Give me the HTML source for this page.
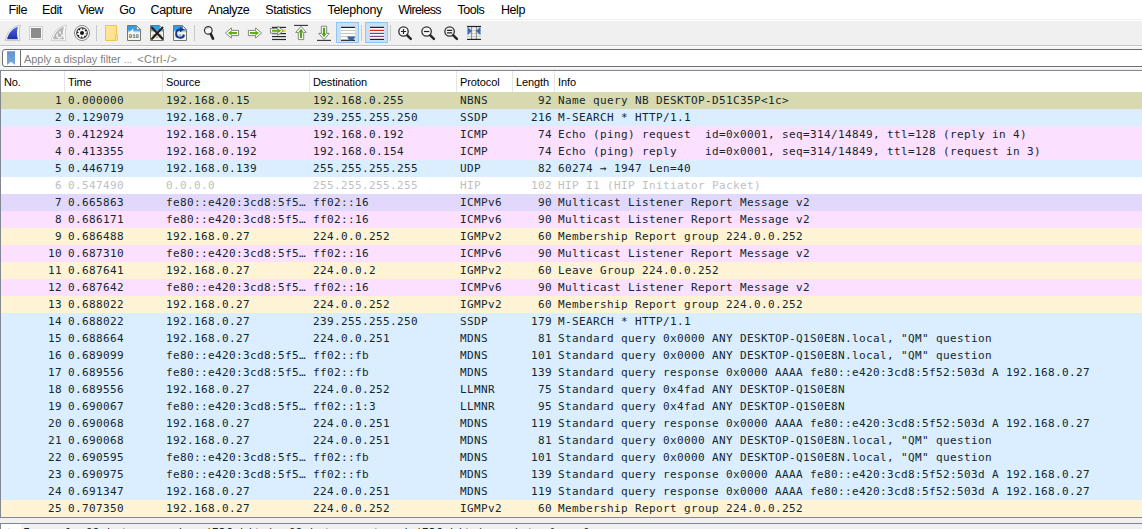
<!DOCTYPE html>
<html><head><meta charset="utf-8"><title>Wireshark</title>
<style>
html,body{margin:0;padding:0}
body{width:1142px;height:529px;overflow:hidden;background:#f0f0f0;position:relative;font-family:"Liberation Sans",sans-serif;font-size:12px;color:#000}
#menubar{position:absolute;left:0;top:0;width:1142px;height:19px;background:#fff}
#menubar span{position:absolute;top:3px;font-size:12.5px;line-height:15px;letter-spacing:-0.45px;white-space:nowrap}
#toolbar{position:absolute;left:0;top:19px;width:1142px;height:26px;background:#f0f0f0;border-top:1px solid #f0f0f0;box-sizing:border-box}
#tbw{position:absolute;left:0;top:20px;width:1142px;height:1px;background:#fff}
#tbline{position:absolute;left:0;top:45px;width:1142px;height:1px;background:#c3c3c3}
#tbline2{position:absolute;left:0;top:46px;width:1142px;height:3px;background:#f4f4f4;border-top:1px solid #fdfdfd;box-sizing:border-box}
#fl2{position:absolute;left:0;top:67px;width:1142px;height:1px;background:#fbfbfb}
#filter{position:absolute;left:2px;top:49px;width:1160px;height:18px;box-sizing:border-box;border:1px solid #6e6e6e;border-radius:3px;background:#fff}
#filter .bm{position:absolute;left:0;top:0;width:17px;height:16px;border-right:1px solid #6e6e6e}
#filter .ph{position:absolute;left:21px;top:2px;font-size:11px;line-height:15px;color:#7f7f7f;white-space:nowrap;letter-spacing:-0.05px}
#list{position:absolute;left:0;top:70px;width:1160px;height:448px;box-sizing:border-box;border:1px solid #828790;background:#fff}
#hdr{position:absolute;left:1px;top:71px;width:1141px;height:21px;background:#fff}
#hdr span{position:absolute;top:4px;font-size:11px;line-height:15px;white-space:nowrap;letter-spacing:-0.1px}
#hdr i{position:absolute;top:0;width:1px;height:21px;background:#e5e5e5}
.r{position:absolute;left:1px;width:1141px;height:17px;font-family:"DejaVu Sans Mono","Liberation Mono",monospace;font-size:11px;letter-spacing:0.378px;line-height:17px;white-space:pre;color:#12272e}
.c{position:absolute;top:0px}
.no{right:1080px;text-align:right}
.tm{left:67px}.src{left:165px}.dst{left:312px}.pr{left:459px}
.len{right:590px;text-align:right}
.inf{left:557px}
.ar{line-height:0}
.sel{background:#d9d9b1}
.udp{background:#daeeff}
.icmp{background:#fce0ff}
.hov{background:#e2d8fb}
.igmp{background:#fff3d6}
.hip{background:#fff;color:#c0c0c0}
#gap{position:absolute;left:0;top:518px;width:1142px;height:5px;background:#f0f0f0}
#detail{position:absolute;left:0;top:523px;width:1160px;height:40px;box-sizing:border-box;border:1px solid #828790;background:#fff}
#detail .row{position:absolute;left:20px;top:0;width:1140px;height:20px;padding:0 0 0 2px;background:#f0f0f0;font-family:"DejaVu Sans Mono","Liberation Mono",monospace;font-size:11px;letter-spacing:0.378px;line-height:17px;white-space:pre;color:#12272e}
#detail .ex{position:absolute;left:7px;top:-1px;font-size:11px;line-height:17px;color:#555}
</style></head><body>
<div id="menubar">
<span style="left:8.6px">File</span><span style="left:42px">Edit</span><span style="left:78px">View</span><span style="left:119.3px">Go</span><span style="left:150.6px">Capture</span><span style="left:208px">Analyze</span><span style="left:265.3px">Statistics</span><span style="left:327.4px;letter-spacing:-0.25px">Telephony</span><span style="left:398.2px;letter-spacing:-0.65px">Wireless</span><span style="left:457.4px">Tools</span><span style="left:501px">Help</span>
</div>
<div id="toolbar"></div><div id="tbw"></div>
<div id="tbline"></div><div id="tbline2"></div><div id="fl2"></div>
<svg id="icons" width="500" height="26" viewBox="0 20 500 26" style="position:absolute;left:0;top:20px">
<defs>
<linearGradient id="gfin" x1="0" y1="0" x2="0" y2="1"><stop offset="0" stop-color="#4a68de"/><stop offset="1" stop-color="#1f31ad"/></linearGradient>
<linearGradient id="gfold" x1="0" y1="0" x2="1" y2="1"><stop offset="0" stop-color="#ffe79a"/><stop offset="1" stop-color="#ffdf85"/></linearGradient>
<linearGradient id="gsky" x1="0" y1="0" x2="0" y2="1"><stop offset="0" stop-color="#2a9fec"/><stop offset="0.6" stop-color="#2f9fe8"/><stop offset="1" stop-color="#d8ecf8"/></linearGradient>
<g id="file">
<path d="M0.5,0.5 H9.5 L13.5,4.5 V15.5 H0.5 Z" fill="#f6f6e4" stroke="#777770" stroke-width="1"/>
<path d="M1,1 H9.3 L13,4.7 V7.4 H1 Z" fill="url(#gsky)"/>
<path d="M9.5,0.8 V4.5 H13.2 Z" fill="#fdfdf5" stroke="#6e6e6e" stroke-width="0.6"/>
</g>
<g id="lens">
<circle cx="0" cy="0" r="4.7" fill="#f6f6f6" stroke="#2e2e2e" stroke-width="1.3"/>
<path d="M3.7,3.9 L7.3,7.3" stroke="#262626" stroke-width="2.5" stroke-linecap="round"/>
</g>
</defs>
<!-- start capture fin -->
<path d="M5.2,40.6 C6.5,33 12,26 20.4,25.2 C19,30 19,36 20,40.6 Z" fill="#f9f9f9" stroke="#b9b9b9" stroke-width="0.8"/>
<path d="M7,39.2 C8.3,33.5 12.5,28.3 18,26.8 C16.6,31 16.6,35.5 18,39.2 Z" fill="url(#gfin)"/>
<!-- stop -->
<rect x="29.5" y="26.5" width="13" height="13" fill="#fafafa" stroke="#d2d2d2" stroke-width="1"/>
<rect x="31" y="28" width="10" height="10" fill="#8b8b8b"/>
<!-- restart fin -->
<path d="M51.2,40.6 C52.5,33 58,26 66.4,25.2 C65,30 65,36 66,40.6 Z" fill="#f9f9f9" stroke="#c8c8c8" stroke-width="0.8"/>
<path d="M53,39.2 C54.3,33.5 58.5,28.3 64,26.8 C62.6,31 62.6,35.5 64,39.2 Z" fill="#b5b5b5"/>
<path d="M61.9,34.2 A2.6,2.6 0 1 1 57.6,33.6" fill="none" stroke="#f4f4f4" stroke-width="1.4"/><path d="M57.9,31.6 H60.9 V34.6 Z" fill="#f4f4f4"/>
<!-- options gear -->
<circle cx="82" cy="33" r="7.5" fill="#fdfdfd" stroke="#6c6c6c" stroke-width="0.8"/>
<circle cx="82" cy="33" r="5.8" fill="#252525"/>
<circle cx="82" cy="33" r="3.9" fill="none" stroke="#fafafa" stroke-width="1.8" stroke-dasharray="1.85 1.213" transform="rotate(12 82 33)"/>
<circle cx="82" cy="33" r="3.5" fill="#fafafa"/>
<circle cx="82" cy="33" r="2" fill="#141414"/>
<!-- separators -->
<g stroke="#c9c9c9" stroke-width="1"><path d="M96.5,25 V41"/><path d="M194.5,25 V41"/><path d="M361.5,25 V41"/><path d="M390.5,25 V41"/></g>
<!-- folder -->
<path d="M105.5,25.5 H116.5 V34.5 H117.4 V40.5 H105.5 Z" fill="url(#gfold)" stroke="#eec548" stroke-width="1"/>
<path d="M115.5,40.5 V35.2 Q115.5,34.5 116.2,34.5 H116.8 Q117.4,34.5 117.4,35.2 V40.5" fill="#ffe9a6" stroke="#eec548" stroke-width="1"/>
<!-- file 010 -->
<use href="#file" x="127" y="25"/>
<path d="M129.6,32.6 C131,31.4 132,29.8 133.2,28 C133,30 133.2,31.6 134,32.6 Z" fill="#fff"/>
<text x="133.9" y="38.4" font-family="Liberation Mono, monospace" font-size="5.6" font-weight="bold" fill="#666" text-anchor="middle" letter-spacing="0">010</text>
<!-- close file -->
<use href="#file" x="150" y="25"/>
<text x="156.9" y="38.4" font-family="Liberation Mono, monospace" font-size="5.6" font-weight="bold" fill="#999" text-anchor="middle" letter-spacing="-0.2">010</text>
<path d="M152,27.6 L162.4,38.8 M162.4,27.6 L152,38.8" stroke="#1e1e1e" stroke-width="2.1" stroke-linecap="round"/>
<!-- reload -->
<use href="#file" x="173" y="25"/>
<text x="179.9" y="38.4" font-family="Liberation Mono, monospace" font-size="5.6" font-weight="bold" fill="#999" text-anchor="middle" letter-spacing="-0.2">010</text>
<path d="M184.1,34.9 A4.1,4.1 0 1 1 180.4,29.5" fill="none" stroke="#163a8c" stroke-width="1.9"/>
<path d="M180,26.8 L184.3,29.6 L180,32.2 Z" fill="#163a8c"/>
<!-- find -->
<circle cx="208.3" cy="30.4" r="3.8" fill="#f8f8f8" stroke="#2e2e2e" stroke-width="1.2"/>
<path d="M206,29.2 A2.6,2.6 0 0 1 208.8,27.9" fill="none" stroke="#999" stroke-width="0.7"/>
<path d="M210.8,34 L213,38.6" stroke="#222" stroke-width="2.6" stroke-linecap="round"/>
<!-- back -->
<path d="M225.4,33 L231.4,27.9 V30.4 H238.6 V35.6 H231.4 V38.1 Z" fill="#fff" stroke="#858585" stroke-width="1" stroke-linejoin="round"/>
<path d="M227.8,33 L231.6,30.4 V32 H237 V34 H231.6 V35.6 Z" fill="#5cb00f"/>
<!-- forward -->
<path d="M261.6,33 L255.6,27.9 V30.4 H248.4 V35.6 H255.6 V38.1 Z" fill="#fff" stroke="#858585" stroke-width="1" stroke-linejoin="round"/>
<path d="M259.2,33 L255.4,30.4 V32 H250 V34 H255.4 V35.6 Z" fill="#5cb00f"/>
<!-- goto -->
<g stroke="#232b2e" stroke-width="1.2"><path d="M272,27.4 H286"/><path d="M272,30.6 H286"/><path d="M272,33.6 H286"/><path d="M272,36.6 H286"/><path d="M272,39.5 H286"/></g>
<rect x="282" y="29.3" width="4" height="2.6" fill="#f7e03c"/>
<path d="M283.4,30.8 L277.6,26.2 V28.4 H270.4 V33.2 H277.6 V35.4 Z" fill="#fff" stroke="#858585" stroke-width="1" stroke-linejoin="round"/>
<path d="M281.2,30.8 L277.4,28.2 V29.8 H272 V31.8 H277.4 V33.4 Z" fill="#5cb00f"/>
<!-- first -->
<path d="M294,25.4 H308" stroke="#333" stroke-width="1.1"/>
<path d="M301,26.3 L306.3,32.4 H303.7 V39.6 H298.3 V32.4 H295.7 Z" fill="#fff" stroke="#858585" stroke-width="1" stroke-linejoin="round"/>
<path d="M301,28.6 L303.7,32.4 H302.1 V38 H299.9 V32.4 H298.3 Z" fill="#4fa80c"/>
<!-- last -->
<path d="M317,40.4 H331" stroke="#333" stroke-width="1.1"/>
<path d="M324,39.5 L329.3,33.4 H326.7 V26.2 H321.3 V33.4 H318.7 Z" fill="#fff" stroke="#858585" stroke-width="1" stroke-linejoin="round"/>
<path d="M324,37.2 L326.7,33.4 H325.1 V27.8 H322.9 V33.4 H321.3 Z" fill="#4fa80c"/>
<!-- autoscroll -->
<rect x="336.5" y="22.5" width="22" height="20" fill="#c9dff3" stroke="#92c5f2" stroke-width="1"/>
<rect x="341" y="27" width="14" height="13.5" fill="#fbfbf8"/>
<g stroke="#c9c9bf" stroke-width="1"><path d="M341,30.5 H355"/><path d="M341,33.5 H355"/><path d="M341,36.5 H355"/></g>
<path d="M341,27.4 H355" stroke="#222" stroke-width="1.2"/>
<path d="M341,40.3 H355" stroke="#222" stroke-width="1.2"/>
<path d="M347.2,36.6 H355.2 C354.6,39 353,40.6 351.2,40.6 C349.4,40.6 347.8,39 347.2,36.6 Z" fill="#3565a6"/>
<!-- colorize -->
<rect x="365.5" y="22.5" width="22" height="20" fill="#c9dff3" stroke="#92c5f2" stroke-width="1"/>
<rect x="370" y="27" width="14" height="13" fill="#fdfdfd"/>
<g stroke-width="1.2"><path d="M370,27.4 H384" stroke="#222"/><path d="M370,30.4 H384" stroke="#e42222"/><path d="M370,33.4 H384" stroke="#3558a5"/><path d="M370,36.4 H384" stroke="#774a85"/><path d="M370,39.4 H384" stroke="#222"/></g>
<!-- zoom in/out/100 -->
<use href="#lens" x="403.5" y="31.5"/>
<path d="M400.9,31.5 H406.1 M403.5,28.9 V34.1" stroke="#222" stroke-width="1.2"/>
<use href="#lens" x="426.6" y="31.5"/>
<path d="M424,31.5 H429.2" stroke="#222" stroke-width="1.2"/>
<use href="#lens" x="449.6" y="31.5"/>
<path d="M447,30.4 H452.2 M447,32.8 H452.2" stroke="#222" stroke-width="1.2"/>
<!-- resize columns -->
<g stroke="#cfcfc6" stroke-width="1"><path d="M467,30.5 H481"/><path d="M467,33.5 H481"/><path d="M467,36.5 H481"/></g>
<g stroke="#8b8b86" stroke-width="1"><path d="M471.6,26.5 V39.5"/><path d="M476.4,26.5 V39.5"/></g>
<path d="M467,26.5 H481" stroke="#222" stroke-width="1.2"/>
<path d="M467,39.4 H481" stroke="#222" stroke-width="1.2"/>
<path d="M467.8,27.4 L471.8,31 L467.8,34.6 Z" fill="#3a6bb4" stroke="#3a6bb4" stroke-width="0.6" stroke-linejoin="round"/>
<path d="M480.2,27.4 L476.2,31 L480.2,34.6 Z" fill="#3a6bb4" stroke="#3a6bb4" stroke-width="0.6" stroke-linejoin="round"/>
</svg>

<div id="filter"><div class="bm"><svg width="17" height="16" viewBox="0 0 17 16" style="position:absolute;left:0;top:0"><defs><linearGradient id="gbm" x1="0" y1="0" x2="0" y2="1"><stop offset="0" stop-color="#5f93d2"/><stop offset="1" stop-color="#7ba9dc"/></linearGradient></defs><path d="M4,1.3 H12 V15 L8,11.8 L4,15 Z" fill="url(#gbm)"/></svg></div><div class="ph">Apply a display filter <span style="font-size:8.5px;line-height:0">…</span> <span style="letter-spacing:0.42px;margin-left:2px">&lt;Ctrl-/&gt;</span></div></div>
<div id="list"></div>
<div id="hdr">
<span style="left:3px">No.</span><span style="left:67px">Time</span><span style="left:165px">Source</span><span style="left:312px">Destination</span><span style="left:459px">Protocol</span><span style="left:515px">Length</span><span style="left:557px">Info</span>
<i style="left:63px"></i><i style="left:161px"></i><i style="left:308px"></i><i style="left:455px"></i><i style="left:511px"></i><i style="left:553px"></i>
</div>
<div class="r sel" style="top:92px"><span class="c no">1</span><span class="c tm">0.000000</span><span class="c src">192.168.0.15</span><span class="c dst">192.168.0.255</span><span class="c pr">NBNS</span><span class="c len">92</span><span class="c inf">Name query NB DESKTOP-D51C35P&lt;1c&gt;</span></div>
<div class="r udp" style="top:109px"><span class="c no">2</span><span class="c tm">0.129079</span><span class="c src">192.168.0.7</span><span class="c dst">239.255.255.250</span><span class="c pr">SSDP</span><span class="c len">216</span><span class="c inf">M-SEARCH * HTTP/1.1</span></div>
<div class="r icmp" style="top:126px"><span class="c no">3</span><span class="c tm">0.412924</span><span class="c src">192.168.0.154</span><span class="c dst">192.168.0.192</span><span class="c pr">ICMP</span><span class="c len">74</span><span class="c inf">Echo (ping) request  id=0x0001, seq=314/14849, ttl=128 (reply in 4)</span></div>
<div class="r icmp" style="top:143px"><span class="c no">4</span><span class="c tm">0.413355</span><span class="c src">192.168.0.192</span><span class="c dst">192.168.0.154</span><span class="c pr">ICMP</span><span class="c len">74</span><span class="c inf">Echo (ping) reply    id=0x0001, seq=314/14849, ttl=128 (request in 3)</span></div>
<div class="r udp" style="top:160px"><span class="c no">5</span><span class="c tm">0.446719</span><span class="c src">192.168.0.139</span><span class="c dst">255.255.255.255</span><span class="c pr">UDP</span><span class="c len">82</span><span class="c inf">60274 <span class="ar">→</span> 1947 Len=40</span></div>
<div class="r hip" style="top:177px"><span class="c no">6</span><span class="c tm">0.547490</span><span class="c src">0.0.0.0</span><span class="c dst">255.255.255.255</span><span class="c pr">HIP</span><span class="c len">102</span><span class="c inf">HIP I1 (HIP Initiator Packet)</span></div>
<div class="r hov" style="top:194px"><span class="c no">7</span><span class="c tm">0.665863</span><span class="c src">fe80::e420:3cd8:5f5…</span><span class="c dst">ff02::16</span><span class="c pr">ICMPv6</span><span class="c len">90</span><span class="c inf">Multicast Listener Report Message v2</span></div>
<div class="r icmp" style="top:211px"><span class="c no">8</span><span class="c tm">0.686171</span><span class="c src">fe80::e420:3cd8:5f5…</span><span class="c dst">ff02::16</span><span class="c pr">ICMPv6</span><span class="c len">90</span><span class="c inf">Multicast Listener Report Message v2</span></div>
<div class="r igmp" style="top:228px"><span class="c no">9</span><span class="c tm">0.686488</span><span class="c src">192.168.0.27</span><span class="c dst">224.0.0.252</span><span class="c pr">IGMPv2</span><span class="c len">60</span><span class="c inf">Membership Report group 224.0.0.252</span></div>
<div class="r icmp" style="top:245px"><span class="c no">10</span><span class="c tm">0.687310</span><span class="c src">fe80::e420:3cd8:5f5…</span><span class="c dst">ff02::16</span><span class="c pr">ICMPv6</span><span class="c len">90</span><span class="c inf">Multicast Listener Report Message v2</span></div>
<div class="r igmp" style="top:262px"><span class="c no">11</span><span class="c tm">0.687641</span><span class="c src">192.168.0.27</span><span class="c dst">224.0.0.2</span><span class="c pr">IGMPv2</span><span class="c len">60</span><span class="c inf">Leave Group 224.0.0.252</span></div>
<div class="r icmp" style="top:279px"><span class="c no">12</span><span class="c tm">0.687642</span><span class="c src">fe80::e420:3cd8:5f5…</span><span class="c dst">ff02::16</span><span class="c pr">ICMPv6</span><span class="c len">90</span><span class="c inf">Multicast Listener Report Message v2</span></div>
<div class="r igmp" style="top:296px"><span class="c no">13</span><span class="c tm">0.688022</span><span class="c src">192.168.0.27</span><span class="c dst">224.0.0.252</span><span class="c pr">IGMPv2</span><span class="c len">60</span><span class="c inf">Membership Report group 224.0.0.252</span></div>
<div class="r udp" style="top:313px"><span class="c no">14</span><span class="c tm">0.688022</span><span class="c src">192.168.0.27</span><span class="c dst">239.255.255.250</span><span class="c pr">SSDP</span><span class="c len">179</span><span class="c inf">M-SEARCH * HTTP/1.1</span></div>
<div class="r udp" style="top:330px"><span class="c no">15</span><span class="c tm">0.688664</span><span class="c src">192.168.0.27</span><span class="c dst">224.0.0.251</span><span class="c pr">MDNS</span><span class="c len">81</span><span class="c inf">Standard query 0x0000 ANY DESKTOP-Q1S0E8N.local, "QM" question</span></div>
<div class="r udp" style="top:347px"><span class="c no">16</span><span class="c tm">0.689099</span><span class="c src">fe80::e420:3cd8:5f5…</span><span class="c dst">ff02::fb</span><span class="c pr">MDNS</span><span class="c len">101</span><span class="c inf">Standard query 0x0000 ANY DESKTOP-Q1S0E8N.local, "QM" question</span></div>
<div class="r udp" style="top:364px"><span class="c no">17</span><span class="c tm">0.689556</span><span class="c src">fe80::e420:3cd8:5f5…</span><span class="c dst">ff02::fb</span><span class="c pr">MDNS</span><span class="c len">139</span><span class="c inf">Standard query response 0x0000 AAAA fe80::e420:3cd8:5f52:503d A 192.168.0.27</span></div>
<div class="r udp" style="top:381px"><span class="c no">18</span><span class="c tm">0.689556</span><span class="c src">192.168.0.27</span><span class="c dst">224.0.0.252</span><span class="c pr">LLMNR</span><span class="c len">75</span><span class="c inf">Standard query 0x4fad ANY DESKTOP-Q1S0E8N</span></div>
<div class="r udp" style="top:398px"><span class="c no">19</span><span class="c tm">0.690067</span><span class="c src">fe80::e420:3cd8:5f5…</span><span class="c dst">ff02::1:3</span><span class="c pr">LLMNR</span><span class="c len">95</span><span class="c inf">Standard query 0x4fad ANY DESKTOP-Q1S0E8N</span></div>
<div class="r udp" style="top:415px"><span class="c no">20</span><span class="c tm">0.690068</span><span class="c src">192.168.0.27</span><span class="c dst">224.0.0.251</span><span class="c pr">MDNS</span><span class="c len">119</span><span class="c inf">Standard query response 0x0000 AAAA fe80::e420:3cd8:5f52:503d A 192.168.0.27</span></div>
<div class="r udp" style="top:432px"><span class="c no">21</span><span class="c tm">0.690068</span><span class="c src">192.168.0.27</span><span class="c dst">224.0.0.251</span><span class="c pr">MDNS</span><span class="c len">81</span><span class="c inf">Standard query 0x0000 ANY DESKTOP-Q1S0E8N.local, "QM" question</span></div>
<div class="r udp" style="top:449px"><span class="c no">22</span><span class="c tm">0.690595</span><span class="c src">fe80::e420:3cd8:5f5…</span><span class="c dst">ff02::fb</span><span class="c pr">MDNS</span><span class="c len">101</span><span class="c inf">Standard query 0x0000 ANY DESKTOP-Q1S0E8N.local, "QM" question</span></div>
<div class="r udp" style="top:466px"><span class="c no">23</span><span class="c tm">0.690975</span><span class="c src">fe80::e420:3cd8:5f5…</span><span class="c dst">ff02::fb</span><span class="c pr">MDNS</span><span class="c len">139</span><span class="c inf">Standard query response 0x0000 AAAA fe80::e420:3cd8:5f52:503d A 192.168.0.27</span></div>
<div class="r udp" style="top:483px"><span class="c no">24</span><span class="c tm">0.691347</span><span class="c src">192.168.0.27</span><span class="c dst">224.0.0.251</span><span class="c pr">MDNS</span><span class="c len">119</span><span class="c inf">Standard query response 0x0000 AAAA fe80::e420:3cd8:5f52:503d A 192.168.0.27</span></div>
<div class="r igmp" style="top:500px"><span class="c no">25</span><span class="c tm">0.707350</span><span class="c src">192.168.0.27</span><span class="c dst">224.0.0.252</span><span class="c pr">IGMPv2</span><span class="c len">60</span><span class="c inf">Membership Report group 224.0.0.252</span></div>
<div id="gap"></div>
<div id="detail"><div class="ex">&gt;</div><div class="row">Frame 1: 92 bytes on wire (736 bits), 92 bytes captured (736 bits) on interface 0</div></div>
</body></html>
